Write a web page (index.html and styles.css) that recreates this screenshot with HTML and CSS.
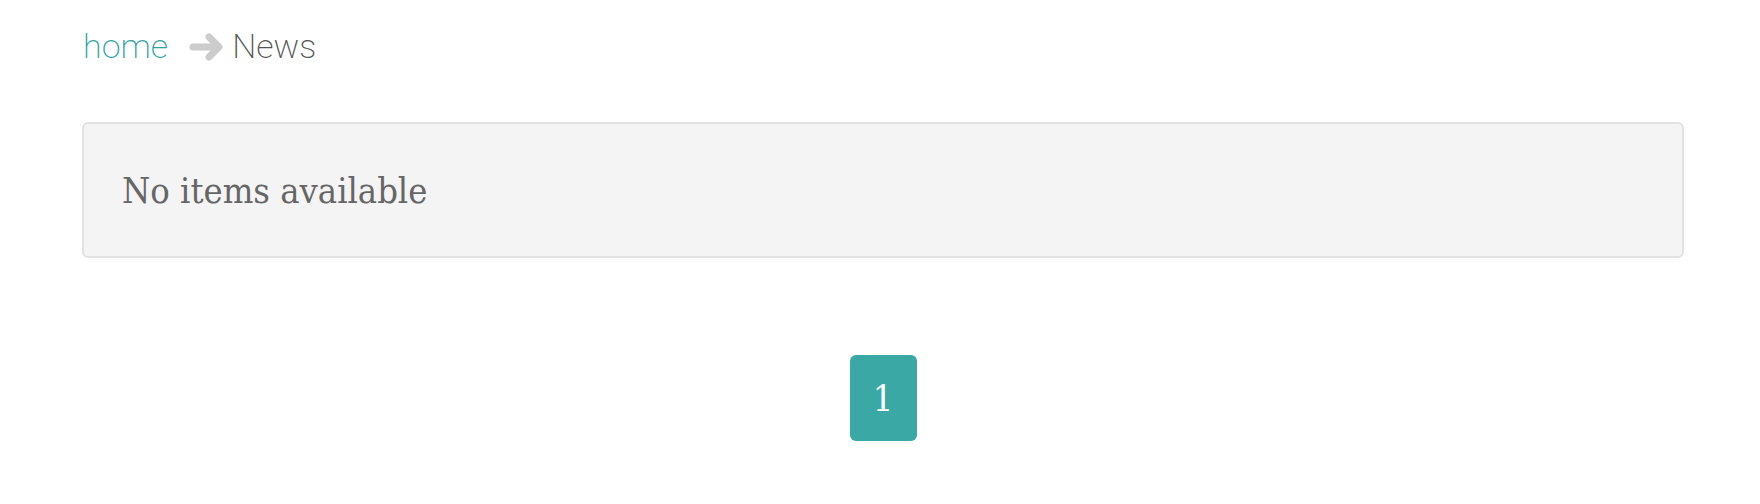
FILE: index.html
```html
<!DOCTYPE html>
<html>
<head>
<meta charset="utf-8">
<link rel="stylesheet" href="styles.css">
</head>
<body>
<div class="page">
  <nav class="crumbs">
    <a class="crumb-link" href="#">home</a>
    <svg class="crumb-arrow" width="36" height="30" viewBox="0 0 36 30" aria-hidden="true">
      <path d="M4 15 H29 M20 5 L30 15 L20 25" fill="none" stroke="#cccccc" stroke-width="7" stroke-linecap="round" stroke-linejoin="round"/>
    </svg>
    <span class="crumb-current">News</span>
  </nav>
  <div class="empty-box">No items available</div>
  <div class="pager">
    <span class="page-btn">1</span>
  </div>
</div>
</body>
</html>
```

FILE: styles.css
```css
html, body {
  margin: 0;
  padding: 0;
  background: #ffffff;
}
.page {
  padding: 0 76px 0 82px;
}
.crumbs {
  display: flex;
  align-items: center;
  height: 44px;
  padding-top: 24px;
  font-family: Roboto, "Liberation Sans", sans-serif;
  font-weight: 200;
  font-size: 34px;
}
.crumb-link {
  color: #2fa5a1;
  text-decoration: none;
  margin-left: 1px;
}
.crumb-arrow {
  margin: 2px 7px 0 21px;
}
.crumb-current {
  color: #555555;
}
.empty-box {
  margin-top: 54px;
  box-sizing: border-box;
  height: 136px;
  background: #f4f4f4;
  border: 2px solid #e2e2e2;
  border-radius: 6px;
  padding: 0 0 0 38px;
  display: flex;
  align-items: center;
  font-family: "DejaVu Serif", "Liberation Serif", serif;
  font-stretch: condensed;
  font-size: 36px;
  color: #666666;
}
.pager {
  display: flex;
  justify-content: center;
  margin-top: 97px;
}
.page-btn {
  width: 67px;
  height: 86px;
  border-radius: 6px;
  background: #3aa8a5;
  color: #ffffff;
  display: flex;
  align-items: center;
  justify-content: center;
  font-family: "DejaVu Serif", "Liberation Serif", serif;
  font-stretch: condensed;
  font-size: 36px;
}
```
